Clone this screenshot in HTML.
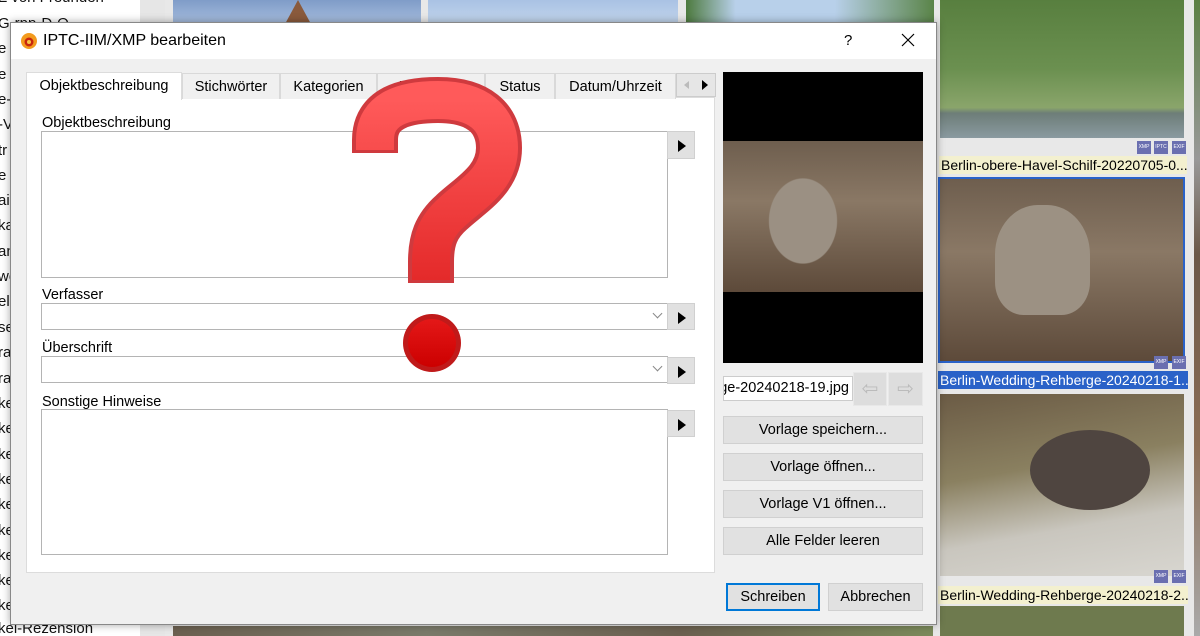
<!DOCTYPE html>
<html><head><meta charset="utf-8"><style>
*{box-sizing:border-box;margin:0;padding:0}
body{width:1200px;height:636px;overflow:hidden;position:relative;background:#f0f0f0;font-family:"Liberation Sans",sans-serif;font-size:14px;color:#000}
.a{position:absolute}
.side{left:0;top:0;width:140px;height:636px;background:#fff;overflow:hidden}
.side div{position:absolute;left:-2px;font-size:15px;white-space:nowrap;color:#111}
.photo{position:absolute}
.lbl{position:absolute;font-size:14px;white-space:nowrap;overflow:hidden;padding-left:2px;line-height:18px}
.dlg{left:10px;top:22px;width:927px;height:603px;background:#f0f0f0;border:1px solid #888;box-shadow:0 0 8px rgba(0,0,0,.35)}
.tb{left:0;top:0;width:925px;height:36px;background:#fff}
.panel{background:#fff;border:1px solid #dcdcdc}
.tab{position:absolute;top:50px;height:26px;background:#f0f0f0;border:1px solid #d9d9d9;border-bottom:none;font-size:14.5px;text-align:center;line-height:26px}
.box{position:absolute;background:#fff;border:1px solid #b4b4b4}
.arr{position:absolute;width:28px;background:#e1e1e1;border:1px solid #d0d0d0}
.arr:after{content:"";position:absolute;left:10px;top:8px;border-left:8px solid #000;border-top:6px solid transparent;border-bottom:6px solid transparent}
.lab{position:absolute;font-size:14.5px}
.btn{position:absolute;background:#e1e1e1;border:1px solid #d0d0d0;text-align:center;font-size:14.5px;line-height:26px}
.chev{position:absolute;right:6px;top:6px;width:7px;height:7px;border-right:1px solid #888;border-bottom:1px solid #888;transform:rotate(45deg)}
.tag{position:absolute;width:14px;height:13px;background:#6a6fb0;color:#fff;font-size:5px;line-height:13px;text-align:center}
</style></head><body>
<div class="a side">
<div style="top:-11px">Z von Freunden</div><div style="top:15px">G-rpp-D-O</div>
<div style="top:40px">e</div><div style="top:66px">e</div><div style="top:91px">e-</div><div style="top:116px">-V</div>
<div style="top:142px">tr</div><div style="top:167px">e</div><div style="top:192px">ai</div><div style="top:217px">ka</div>
<div style="top:243px">an</div><div style="top:268px">we</div><div style="top:293px">el</div><div style="top:319px">se</div>
<div style="top:344px">ra</div><div style="top:370px">ra</div><div style="top:395px">ke</div><div style="top:420px">ke</div>
<div style="top:446px">ke</div><div style="top:471px">ke</div><div style="top:496px">ke</div><div style="top:522px">ke</div>
<div style="top:547px">ke</div><div style="top:572px">ke</div><div style="top:597px">ke</div><div style="top:620px">kel-Rezension</div>
</div>
<div class="a" style="left:140px;top:0;width:25px;height:636px;background:#e6e6e6"></div>
<div class="a" style="left:165px;top:0;width:1035px;height:636px;background:#e8e8e8"></div>
<div class="photo" style="left:173px;top:0;width:248px;height:25px;background:linear-gradient(#7f9cc8,#a9bfdf)"></div>
<div class="photo" style="left:285px;top:0;width:26px;height:24px;background:#8a5a3c;clip-path:polygon(50% 0,100% 100%,0 100%)"></div>
<div class="photo" style="left:428px;top:0;width:250px;height:25px;background:linear-gradient(#a9c2e4,#c4d6ec)"></div>
<div class="photo" style="left:686px;top:0;width:248px;height:25px;background:linear-gradient(90deg,#4d7a3e,#b8d0ea 20%,#b8d0ea 60%,#5a8448)"></div>
<div class="photo" style="left:940px;top:0;width:244px;height:138px;background:linear-gradient(#587f3f 0,#6b9050 50%,#8aa56b 78%,#6d7d78 82%,#8a9aa0 100%)"></div>
<div class="tag" style="left:1137px;top:141px">XMP</div><div class="tag" style="left:1154px;top:141px">IPTC</div><div class="tag" style="left:1172px;top:141px">EXIF</div>
<div class="lbl" style="left:939px;top:156px;width:248px;background:#f3f0cf">Berlin-obere-Havel-Schilf-20220705-0...</div>
<div class="photo" style="left:938px;top:177px;width:247px;height:186px;border:2px solid #2a62c8;background:linear-gradient(#6e5e4e,#8a7865 40%,#5d4a3a)"></div>
<div class="photo" style="left:995px;top:205px;width:95px;height:110px;border-radius:45% 45% 30% 30%;background:#9c9183"></div>
<div class="tag" style="left:1154px;top:356px">XMP</div><div class="tag" style="left:1172px;top:356px">EXIF</div>
<div class="lbl" style="left:938px;top:371px;width:250px;background:#2a62c8;color:#fff">Berlin-Wedding-Rehberge-20240218-1...</div>
<div class="photo" style="left:940px;top:394px;width:244px;height:182px;background:linear-gradient(170deg,#6b5b45,#8a8060 40%,#c9c6be 70%,#d8d6d0)"></div>
<div class="photo" style="left:1030px;top:430px;width:120px;height:80px;border-radius:50%;background:#4f4540"></div>
<div class="tag" style="left:1154px;top:570px">XMP</div><div class="tag" style="left:1172px;top:570px">EXIF</div>
<div class="lbl" style="left:938px;top:586px;width:250px;background:#f3f0cf">Berlin-Wedding-Rehberge-20240218-2...</div>
<div class="photo" style="left:940px;top:606px;width:244px;height:30px;background:#6e7a4e"></div>
<div class="photo" style="left:1194px;top:0;width:6px;height:636px;background:linear-gradient(#5b7f44,#999 25%,#6b5848 40%,#8b6d55 70%,#aaa)"></div>
<div class="photo" style="left:173px;top:626px;width:760px;height:10px;background:linear-gradient(90deg,#6b6050,#7a7a6a,#6b6050,#7b8a5b)"></div>
<div class="a dlg">
<div class="a tb"></div>
<svg class="a" style="left:8px;top:8px" width="20" height="20" viewBox="0 0 20 20"><circle cx="10" cy="10" r="8" fill="#f39b1e"/><circle cx="10" cy="11" r="4.5" fill="#c8260f"/><circle cx="10" cy="11" r="2" fill="#f7c242"/></svg>
<div class="a" style="left:32px;top:9px;font-size:16px">IPTC-IIM/XMP bearbeiten</div>
<div class="a" style="left:833px;top:9px;font-size:15px">?</div>
<svg class="a" style="left:890px;top:10px" width="14" height="14" viewBox="0 0 14 14"><path d="M1,1 L13,13 M13,1 L1,13" stroke="#000" stroke-width="1.2"/></svg>
<div class="a panel" style="left:15px;top:74px;width:689px;height:476px"></div>
<div class="tab" style="left:15px;top:49px;width:156px;height:28px;background:#fff;border-color:#dcdcdc">Objektbeschreibung</div>
<div class="tab" style="left:171px;width:98px">Stichwörter</div>
<div class="tab" style="left:269px;width:97px">Kategorien</div>
<div class="tab" style="left:366px;width:108px">Bildrechte</div>
<div class="tab" style="left:474px;width:70px">Status</div>
<div class="tab" style="left:544px;width:121px">Datum/Uhrzeit</div>
<div class="a" style="left:665px;top:50px;width:40px;height:24px;background:#e6e6e6;border:1px solid #ccc"></div>
<div class="a" style="left:673px;top:58px;border-right:5px solid #bbb;border-top:4px solid transparent;border-bottom:4px solid transparent"></div>
<div class="a" style="left:691px;top:57px;border-left:6px solid #000;border-top:5px solid transparent;border-bottom:5px solid transparent"></div>
<div class="lab" style="left:31px;top:92px">Objektbeschreibung</div>
<div class="box" style="left:30px;top:108px;width:627px;height:147px"></div>
<div class="arr" style="left:656px;top:108px;height:28px"></div>
<div class="lab" style="left:31px;top:264px">Verfasser</div>
<div class="box" style="left:30px;top:280px;width:627px;height:27px"><div class="chev"></div></div>
<div class="arr" style="left:656px;top:280px;height:27px"></div>
<div class="lab" style="left:31px;top:317px">Überschrift</div>
<div class="box" style="left:30px;top:333px;width:627px;height:27px"><div class="chev"></div></div>
<div class="arr" style="left:656px;top:334px;height:27px"></div>
<div class="lab" style="left:31px;top:371px">Sonstige Hinweise</div>
<div class="box" style="left:30px;top:386px;width:627px;height:146px"></div>
<div class="arr" style="left:656px;top:387px;height:27px"></div>
<div class="a" style="left:712px;top:49px;width:200px;height:291px;background:#000"></div>
<div class="a" style="left:712px;top:118px;width:200px;height:151px;background:radial-gradient(ellipse 48px 60px at 80px 80px,#9b9083 70%,transparent 72%),linear-gradient(#6e5e4e,#8a7865 40%,#5d4a3a)"></div>
<div class="a" style="left:712px;top:353px;width:130px;height:25px;background:#fff;border:1px solid #ccc;font-size:14.5px;line-height:23px;overflow:hidden;white-space:nowrap;direction:rtl;padding-right:3px">ge-20240218-19.jpg</div>
<div class="a" style="left:842px;top:349px;width:34px;height:34px;background:#ddd;border:1px solid #e8e8e8;color:#bbb;font-size:20px;text-align:center;line-height:32px">⇦</div>
<div class="a" style="left:877px;top:349px;width:35px;height:34px;background:#ddd;border:1px solid #e8e8e8;color:#bbb;font-size:20px;text-align:center;line-height:32px">⇨</div>
<div class="btn" style="left:712px;top:393px;width:200px;height:28px">Vorlage speichern...</div>
<div class="btn" style="left:712px;top:430px;width:200px;height:28px">Vorlage öffnen...</div>
<div class="btn" style="left:712px;top:467px;width:200px;height:28px">Vorlage V1 öffnen...</div>
<div class="btn" style="left:712px;top:504px;width:200px;height:28px">Alle Felder leeren</div>
<div class="btn" style="left:715px;top:560px;width:94px;height:28px;border:2px solid #0078d7;line-height:24px">Schreiben</div>
<div class="btn" style="left:817px;top:560px;width:95px;height:28px">Abbrechen</div>
</div>
<svg class="a" style="left:0;top:0" width="1200" height="636" viewBox="0 0 1200 636">
<defs><linearGradient id="g" x1="0" y1="0" x2="0" y2="1"><stop offset="0" stop-color="#ff5a5a"/><stop offset="1" stop-color="#e42a2a"/></linearGradient>
<linearGradient id="g2" x1="0" y1="0" x2="0" y2="1"><stop offset="0" stop-color="#e41818"/><stop offset="1" stop-color="#cc0000"/></linearGradient></defs>
<path d="M375,153 L375,140 C375,108 405,100 438,100 C478,100 499,118 499,148 C499,180 470,195 452,212 C436,226 431,240 431,262 L431,283" fill="none" stroke="#cf3a3e" stroke-width="46" stroke-linejoin="round"/>
<path d="M375,150 L375,140 C375,108 405,100 438,100 C478,100 499,118 499,148 C499,180 470,195 452,212 C436,226 431,240 431,262 L431,280" fill="none" stroke="url(#g)" stroke-width="38" stroke-linejoin="round"/>
<circle cx="432" cy="343" r="29" fill="#c01a1a"/><circle cx="432" cy="343" r="24" fill="url(#g2)"/>
</svg>
</body></html>
